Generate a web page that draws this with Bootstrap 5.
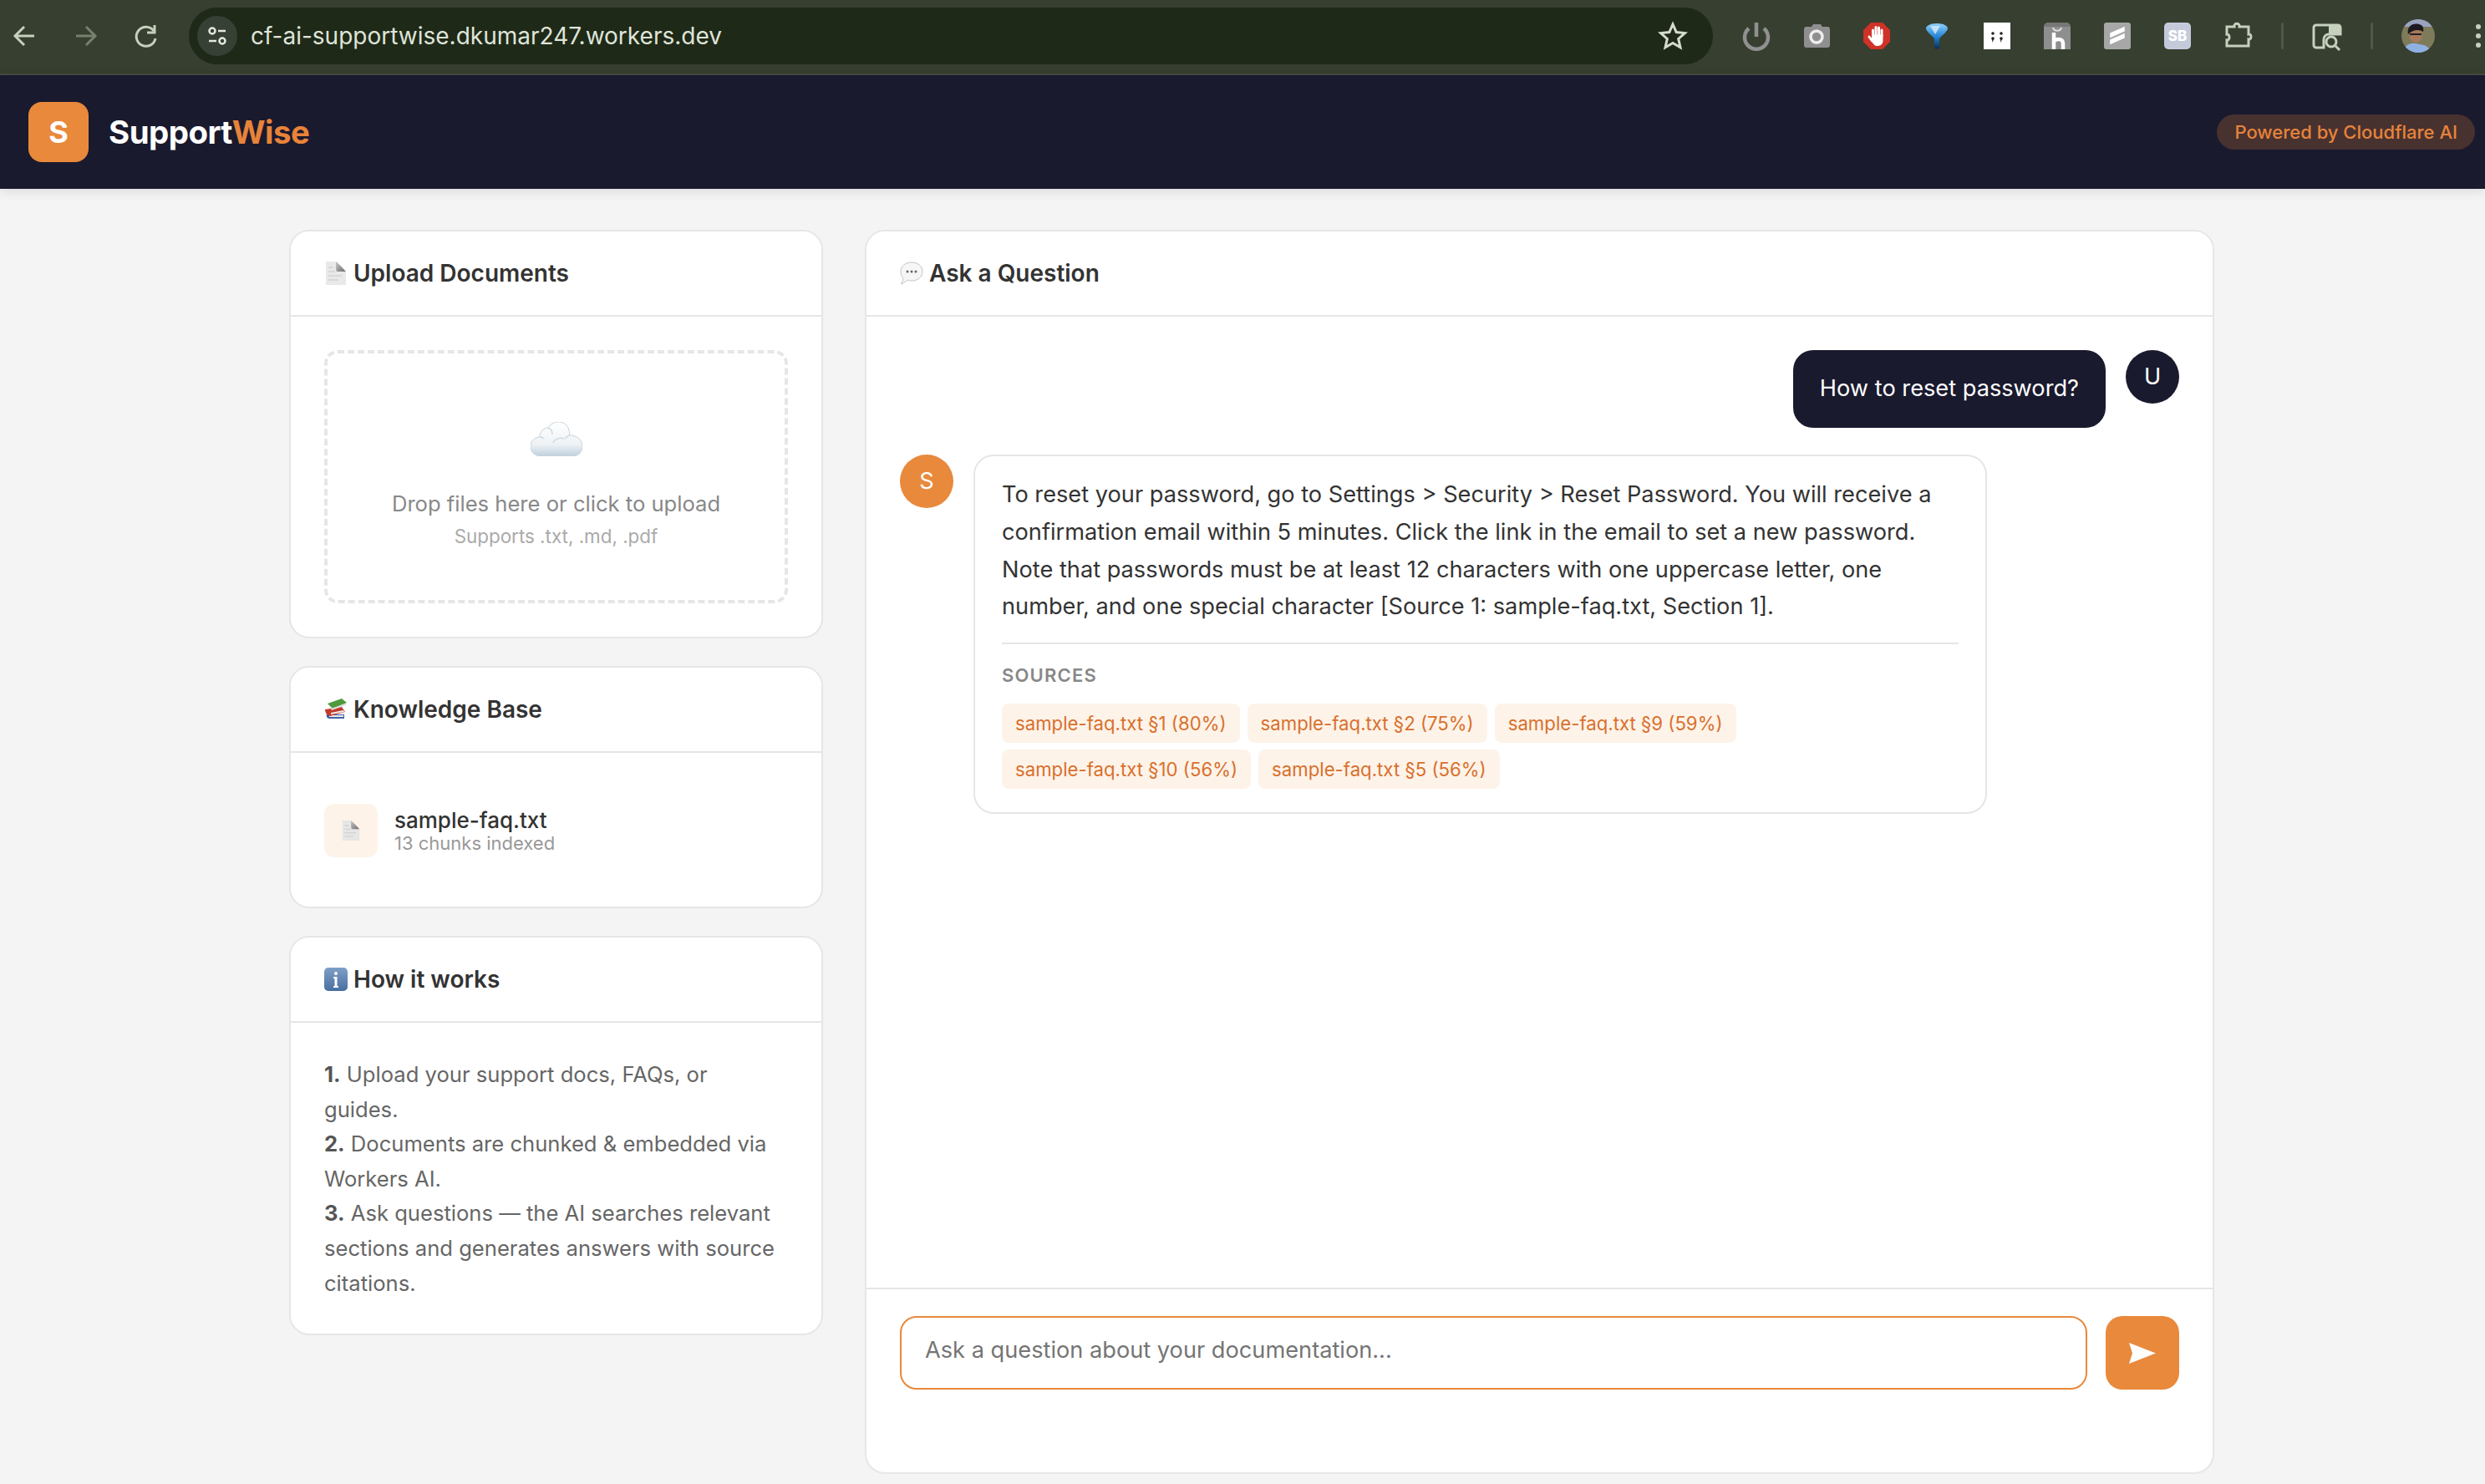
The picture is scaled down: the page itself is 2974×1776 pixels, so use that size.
<!DOCTYPE html>
<html lang="en">
<head>
  <meta charset="UTF-8">
  <meta name="viewport" content="width=device-width, initial-scale=1.0">
  <title>SupportWise</title>
  <link href="https://cdn.jsdelivr.net/npm/bootstrap@5.3.0/dist/css/bootstrap.min.css" rel="stylesheet">
  <style>
    html, body { height: 100%; }
    body { background: #f4f4f4; font-family: Inter, "Liberation Sans", sans-serif; color: #333; overflow: hidden; }

    /* browser chrome */
    .chrome-bar { height: 90px; background: #373f30; border-bottom: 2px solid #464d40; padding: 0 2px 2px 10px; }
    .chrome-slot { width: 40px; height: 40px; flex: none; }
    .chrome-nav { gap: 32px; }
    .address-box { flex: 1; height: 68px; margin: 0 32px; padding-left: 10px; background: #1f2918; border-radius: 34px; color: #dfe4d9; font-size: 28px; }
    .tune-icon { width: 48px; height: 48px; background: #374034; border-radius: 50%; margin-right: 16px; }
    .address-text { flex: 1; }
    .star-icon { margin-right: 30px; }
    .chrome-exts { gap: 32px; }
    .chrome-sep { width: 3px; height: 32px; background: #4f5948; flex: none; border-radius: 2px; }
    .face-slot { margin-left: 2px; }
    .dots-slot { width: 12px; margin-left: 46px; flex: none; }

    /* app header */
    .brand-bar { height: 136px; background: #1a1a2e; padding: 0 12px 0 34px; box-shadow: 0 2px 14px rgba(0,0,0,.12); position: relative; }
    .brand-logo { width: 72px; height: 72px; background: #e8893c; border-radius: 16px; color: #fff; font-size: 36px; font-weight: 700; margin-right: 24px; }
    .brand-name { font-size: 38.4px; font-weight: 700; color: #fff; letter-spacing: -.5px; padding-top: 2px; }
    .brand-name span { color: #e8833a; }
    .powered-pill { height: 42px; padding: 0 21px; background: #473230; color: #e8833a; font-size: 22px; font-weight: 500; border-radius: 21px; }

    /* page */
    .page-wrap { padding: 49px 324px 12px 346px; gap: 50px; height: 1550px; }
    .side-col { width: 639px; flex: none; gap: 33px; }
    .panel { --bs-card-border-width: 2px; --bs-card-border-color: #e6e6e6; --bs-card-border-radius: 24px; --bs-card-inner-border-radius: 22px; --bs-card-cap-bg: #fff; --bs-card-cap-padding-y: 0; --bs-card-cap-padding-x: 40px; --bs-card-spacer-y: 40px; --bs-card-spacer-x: 40px; background: #fff; }
    .panel-head { height: 102px; border-bottom-width: 2px; gap: 7px; font-size: 28px; font-weight: 600; color: #333; }
    .panel-head svg { flex: none; }
    .main-col { flex: 1; min-width: 0; }

    .drop-zone { height: 303px; border: 4px dashed #e6e6e6; border-radius: 16px; padding-top: 82px; }
    .drop-title { font-size: 25.6px; color: #888; margin-top: 37px; line-height: 40px; }
    .drop-note { font-size: 22.4px; color: #aaa; line-height: 38px; }

    .doc-row { padding: 21px 0 19px; gap: 20px; }
    .doc-thumb { width: 64px; height: 64px; background: #fdf3e9; border-radius: 12px; flex: none; }
    .doc-name { font-size: 26px; font-weight: 500; color: #333; line-height: 30px; }
    .doc-meta { font-size: 22px; color: #999; line-height: 24px; }

    .how-text { font-size: 25.6px; line-height: 41.6px; color: #666; padding-top: 41px; padding-right: 46px; }
    .how-text strong { color: #555; font-weight: 700; }

    /* chat */
    .chat-log { flex: 1; padding: 40px; gap: 32px; }
    .round-face { width: 64px; height: 64px; border-radius: 50%; color: #fff; font-size: 27.2px; flex: none; }
    .face-user { background: #1a1a2e; }
    .face-bot { background: #e8893c; }
    .user-msg { gap: 24px; }
    .user-bubble { height: 93px; padding: 0 32px; background: #1a1a2e; color: #fff; border-radius: 24px; font-size: 27.2px; }
    .bot-msg { gap: 24px; }
    .bot-bubble { width: 1213px; padding: 24px 32px 28px; border: 2px solid #e6e6e6; border-radius: 24px; font-size: 27.2px; line-height: 44.8px; color: #333; }
    .bot-bubble p { margin: 0; }
    .src-block { margin-top: 20px; padding-top: 19px; border-top: 2px solid #e6e6e6; }
    .src-label { font-size: 22px; font-weight: 600; color: #888; letter-spacing: 1.2px; line-height: 36px; margin-bottom: 16px; }
    .src-chips { gap: 8px 9px; }
    .src-chip { height: 47px; padding: 0 16px; background: #fdf3e9; color: #d9702c; font-size: 22.2px; line-height: 47px; border-radius: 8px; }

    .ask-bar { padding: 32px 40px 99px; border-top: 2px solid #e6e6e6; gap: 22px; }
    .ask-input { height: 88px; border: 2px solid #e8893c; border-radius: 20px; padding: 0 28px 8px; font-size: 27.2px; color: #333; }
    .ask-input::placeholder { color: #757575; opacity: 1; }
    .ask-send { width: 88px; height: 88px; background: #e8893c; border: 0; border-radius: 20px; flex: none; }
  </style>
</head>
<body>

<div class="chrome-bar d-flex align-items-center">
  <div class="chrome-nav d-flex align-items-center">
    <svg class="chrome-slot" viewBox="0 0 40 40" fill="none" stroke="#c5d0bd" stroke-width="3"><path d="M31 20H9M19 9 8 20l11 11"/></svg>
    <svg class="chrome-slot" viewBox="0 0 40 40" fill="none" stroke="#75806d" stroke-width="3"><path d="M9 20h22M21 9l11 11-11 11"/></svg>
    <svg class="chrome-slot" viewBox="0 0 40 40" fill="none" stroke="#c5d0bd" stroke-width="3"><path d="M30 14a11.500 11.500 0 1 0 2 9"/><path d="M31 7v9h-9"/></svg>
  </div>
  <div class="address-box d-flex align-items-center">
    <div class="tune-icon d-flex align-items-center justify-content-center">
      <svg width="26" height="26" viewBox="0 0 26 26" fill="none" stroke="#e3e8de" stroke-width="2.500"><circle cx="7" cy="7" r="3.500"/><path d="M14 7h9M3 19h9"/><circle cx="19" cy="19" r="3.500"/></svg>
    </div>
    <div class="address-text">cf-ai-supportwise.dkumar247.workers.dev</div>
    <svg class="star-icon" width="36" height="36" viewBox="0 0 36 36" fill="none" stroke="#d5dccf" stroke-width="3"><path d="m18 4 4.200 9.600 10.300 1-7.800 6.900 2.300 10.200L18 26.400 9 31.700l2.300-10.200-7.800-6.900 10.300-1z"/></svg>
  </div>
  <div class="chrome-exts d-flex align-items-center">
    <svg class="chrome-slot" viewBox="0 0 40 40" fill="none" stroke="#909090" stroke-width="4.500"><path d="M20 4v17"/><path d="M11 11a14 14 0 1 0 18 0"/></svg>
    <svg class="chrome-slot" viewBox="0 0 40 40"><path d="M5 12a3 3 0 0 1 3-3h6l2-3h9l2 3h6a3 3 0 0 1 3 3v19a3 3 0 0 1-3 3H8a3 3 0 0 1-3-3z" fill="#8f8f8f"/><circle cx="20" cy="21" r="7" fill="none" stroke="#eee" stroke-width="3.500"/></svg>
    <svg class="chrome-slot" viewBox="0 0 40 40"><path d="M13 4h14l9 9v14l-9 9H13l-9-9V13z" fill="#cf3227"/><g stroke="#fff" stroke-width="3" stroke-linecap="round"><path d="M15.500 20v-7M19 20V9.500M22.500 20V10M26 20v-7"/><path d="M14.500 26l-3.500-5"/></g><path d="M14 18.500h13.500v7.500c0 3-2.500 6-6.500 6-3.500 0-5-2-7-6z" fill="#fff"/></svg>
    <svg class="chrome-slot" viewBox="0 0 40 40"><defs><linearGradient id="gem" x1="0" y1="0" x2="0" y2="1"><stop offset="0" stop-color="#8fd0fa"/><stop offset=".55" stop-color="#1f7fd4"/><stop offset="1" stop-color="#0c2c50"/></linearGradient></defs><path d="M20 5c8 0 13 3 13 6 0 3-6 8-10 12v11c0 2-6 2-6 0V23C13 19 7 14 7 11c0-3 5-6 13-6z" fill="url(#gem)"/><path d="M12 8h12l-6 10z" fill="#d7eefd" opacity=".8"/></svg>
    <svg class="chrome-slot" viewBox="0 0 40 40"><rect x="4" y="4" width="32" height="32" fill="#fff"/><g fill="#222"><circle cx="15" cy="17" r="1.800"/><circle cx="25" cy="17" r="1.800"/><circle cx="15" cy="23" r="1.800"/><circle cx="25" cy="23" r="1.800"/><path d="M14 24h2l-1.500 4zM24 24h2l-1.500 4z"/></g></svg>
    <svg class="chrome-slot" viewBox="0 0 40 40"><path d="M4 10a6 6 0 0 1 6-6h20a6 6 0 0 1 6 6v26H4z" fill="#8e8e8e"/><path d="M4 9a5 5 0 0 1 5-5h22a5 5 0 0 1 5 5z" fill="#777"/><path d="M15 10c1 5 9 5 10 0" fill="none" stroke="#ddd" stroke-width="2"/><path d="M16 16v20M17 26c2-3 10-3 10 3v7" fill="none" stroke="#fff" stroke-width="4.500"/></svg>
    <svg class="chrome-slot" viewBox="0 0 40 40"><rect x="4" y="4" width="32" height="32" rx="3" fill="#a7a7a7"/><path d="m12 17 16-7v4l-16 7zM12 25l16-7v4l-16 7z" fill="#fff" stroke="#fff" stroke-width="1.500"/></svg>
    <svg class="chrome-slot" viewBox="0 0 40 40"><rect x="4" y="4" width="32" height="32" rx="5" fill="#c5cadb"/><text x="20" y="26" text-anchor="middle" fill="#fff" font-family="Inter, sans-serif" font-size="17" font-weight="800">SB</text></svg>
    <svg class="chrome-slot" viewBox="0 0 40 40" fill="none" stroke="#c5d0bd" stroke-width="3"><path d="M7 11h9c-1-5 7-5 6 0h11v9c4-1 4 7 0 6v8H7v-7c4 1 4-8 0-7z" transform="translate(0 -2)"/></svg>
    <div class="chrome-sep"></div>
    <svg class="chrome-slot" viewBox="0 0 40 40"><path d="M4 10a3 3 0 0 1 3-3h26a3 3 0 0 1 3 3v8H22a6 6 0 0 0-6 6v10H7a3 3 0 0 1-3-3z" fill="none" stroke="#c5d0bd" stroke-width="3"/><path d="M22 7h11a3 3 0 0 1 3 3v8H22z" fill="#c5d0bd"/><circle cx="25" cy="27" r="6" fill="none" stroke="#c5d0bd" stroke-width="3"/><path d="m30 32 5 5" stroke="#c5d0bd" stroke-width="3"/></svg>
    <div class="chrome-sep"></div>
    <svg class="chrome-slot face-slot" viewBox="0 0 40 40"><clipPath id="face-clip"><circle cx="20" cy="20" r="20"/></clipPath><g clip-path="url(#face-clip)"><rect width="40" height="40" fill="#7d7b5a"/><path d="M0 0h40v9H0z" fill="#9aa3c0"/><path d="M2 40c1-9 8-12 15-11l10 2c5 2 7 4 7 9z" fill="#8fb1e2"/><ellipse cx="17" cy="18" rx="8" ry="10" fill="#a87a5c"/><path d="M8 18c-2-9 5-14 13-12 5 1 6 5 5 9-5-3-12-3-18 3z" fill="#1c1a1e"/><path d="M10 17h14v2h-14z" fill="#222"/></g></svg>
  </div>
  <svg class="dots-slot" height="40" viewBox="0 0 12 40" fill="#c5d0bd"><circle cx="6" cy="9" r="3"/><circle cx="6" cy="20" r="3"/><circle cx="6" cy="31" r="3"/></svg>
</div>

<header class="brand-bar d-flex align-items-center">
  <div class="brand-logo d-flex align-items-center justify-content-center">S</div>
  <div class="brand-name">Support<span>Wise</span></div>
  <div class="powered-pill d-flex align-items-center ms-auto">Powered by Cloudflare AI</div>
</header>

<main class="page-wrap d-flex">
  <div class="side-col d-flex flex-column">

    <section class="card panel">
      <div class="card-header panel-head d-flex align-items-center">
        <svg width="28" height="30" viewBox="0 0 28 30"><defs><linearGradient id="fold" x1="0" y1="0" x2="1" y2="1"><stop offset="0" stop-color="#c8c8c8"/><stop offset="1" stop-color="#6d6d6d"/></linearGradient></defs><path d="M2 1h12l12 12v16H2z" fill="#e9e9e9"/><path d="M14 1c0 6 0 10 1 12h11c-1-1-8-9-12-12z" fill="url(#fold)"/><path d="M5 8h6M5 13h8M5 18h16M5 23h12" stroke="#d2d2d2" stroke-width="1.500"/></svg>
        Upload Documents
      </div>
      <div class="card-body">
        <div class="drop-zone text-center">
          <svg class="d-block mx-auto" width="62" height="41" viewBox="0 0 62 41"><defs><linearGradient id="cloud" x1="0" y1="0" x2="0" y2="1"><stop offset="0" stop-color="#ffffff"/><stop offset=".65" stop-color="#eef2f5"/><stop offset="1" stop-color="#bfd0de"/></linearGradient></defs><path d="M13 41C5 41 0 36 0 29c0-6 5-11 11-11 0-7 5-11 10-11 2-4 7-7 12-7 7 0 12 4 13 10 1 2 1 4 0 6 8-1 16 5 16 13 0 7-5 12-12 12z" fill="url(#cloud)" stroke="#c4d2de" stroke-width="1"/><path d="M27 25c1-4 8-7 13-5M21 7c3 1 5 4 5 8M11 18c2 0 4 1 5 2M46 16c-2 1-4 3-5 4" fill="none" stroke="#cfdbe5" stroke-width="1.500"/></svg>
          <div class="drop-title">Drop files here or click to upload</div>
          <div class="drop-note">Supports .txt, .md, .pdf</div>
        </div>
      </div>
    </section>

    <section class="card panel">
      <div class="card-header panel-head d-flex align-items-center">
        <svg width="28" height="26" viewBox="0 0 28 26"><path d="M3 19h21v5H6c-3 0-4-4-3-5z" fill="#3f62a8"/><path d="M6 20h17v2H6z" fill="#eee"/><path d="M1 13l20-3 4 6-18 5c-3 0-6-4-6-8z" fill="#c33a2c"/><path d="M8 17l15-3 1 2-16 3z" fill="#eee"/><path d="M4 6l17-6 6 5-17 7z" fill="#4f9a3d"/><path d="M8 12l18-6v2L9 14z" fill="#ddd"/></svg>
        Knowledge Base
      </div>
      <div class="card-body">
        <div class="doc-row d-flex align-items-center">
          <div class="doc-thumb d-flex align-items-center justify-content-center">
            <svg width="24" height="28" viewBox="0 0 28 30"><path d="M2 1h12l12 12v16H2z" fill="#e6e6e6"/><path d="M14 1c0 6 0 10 1 12h11c-1-1-8-9-12-12z" fill="url(#fold)"/><path d="M5 8h6M5 13h8M5 18h16M5 23h12" stroke="#d2d2d2" stroke-width="1.500"/></svg>
          </div>
          <div>
            <div class="doc-name">sample-faq.txt</div>
            <div class="doc-meta">13 chunks indexed</div>
          </div>
        </div>
      </div>
    </section>

    <section class="card panel">
      <div class="card-header panel-head d-flex align-items-center">
        <svg width="28" height="28" viewBox="0 0 28 28"><defs><linearGradient id="info" x1="0" y1="0" x2="0" y2="1"><stop offset="0" stop-color="#7f9fc6"/><stop offset="1" stop-color="#486f9f"/></linearGradient></defs><rect width="28" height="28" rx="5" fill="url(#info)"/><circle cx="14" cy="7" r="2" fill="#fff"/><path d="M11 11h4.500v11H17v2h-6v-2h1.500v-9H11z" fill="#fff"/></svg>
        How it works
      </div>
      <div class="card-body how-text">
        <strong>1.</strong> Upload your support docs, FAQs, or guides.<br>
        <strong>2.</strong> Documents are chunked &amp; embedded via Workers AI.<br>
        <strong>3.</strong> Ask questions — the AI searches relevant sections and generates answers with source citations.
      </div>
    </section>

  </div>

  <section class="card panel main-col">
    <div class="card-header panel-head d-flex align-items-center">
      <svg width="28" height="28" viewBox="0 0 28 28"><path d="M14 1c7 0 13 4 13 11s-6 11-13 11c-2 0-3 0-5-1-2 2-5 4-8 5 2-2 3-5 3-7-2-2-3-5-3-8C1 5 7 1 14 1z" fill="#f6f6f6" stroke="#c4c4c4" stroke-width="1"/><g fill="#666"><circle cx="9" cy="12" r="1.500"/><circle cx="14" cy="12" r="1.500"/><circle cx="19" cy="12" r="1.500"/></g></svg>
      Ask a Question
    </div>

    <div class="chat-log d-flex flex-column">
      <div class="user-msg d-flex justify-content-end align-items-start">
        <div class="user-bubble d-flex align-items-center">How to reset password?</div>
        <div class="round-face face-user d-flex align-items-center justify-content-center">U</div>
      </div>
      <div class="bot-msg d-flex align-items-start">
        <div class="round-face face-bot d-flex align-items-center justify-content-center">S</div>
        <div class="bot-bubble">
          <p>To reset your password, go to Settings &gt; Security &gt; Reset Password. You will receive a confirmation email within 5 minutes. Click the link in the email to set a new password. Note that passwords must be at least 12 characters with one uppercase letter, one number, and one special character [Source 1: sample-faq.txt, Section 1].</p>
          <div class="src-block">
            <div class="src-label">SOURCES</div>
            <div class="src-chips d-flex flex-wrap">
              <span class="src-chip">sample-faq.txt §1 (80%)</span>
              <span class="src-chip">sample-faq.txt §2 (75%)</span>
              <span class="src-chip">sample-faq.txt §9 (59%)</span>
              <span class="src-chip">sample-faq.txt §10 (56%)</span>
              <span class="src-chip">sample-faq.txt §5 (56%)</span>
            </div>
          </div>
        </div>
      </div>
    </div>

    <form class="ask-bar d-flex">
      <input class="form-control ask-input" type="text" placeholder="Ask a question about your documentation...">
      <button class="btn ask-send d-flex align-items-center justify-content-center" type="button" aria-label="Send">
        <svg width="32" height="25" viewBox="0 0 32 25"><path d="M0 0l32 12.500L0 25l4-12.500z" fill="#fff"/></svg>
      </button>
    </form>
  </section>
</main>

<script src="https://cdn.jsdelivr.net/npm/bootstrap@5.3.0/dist/js/bootstrap.bundle.min.js"></script>
</body>
</html>
